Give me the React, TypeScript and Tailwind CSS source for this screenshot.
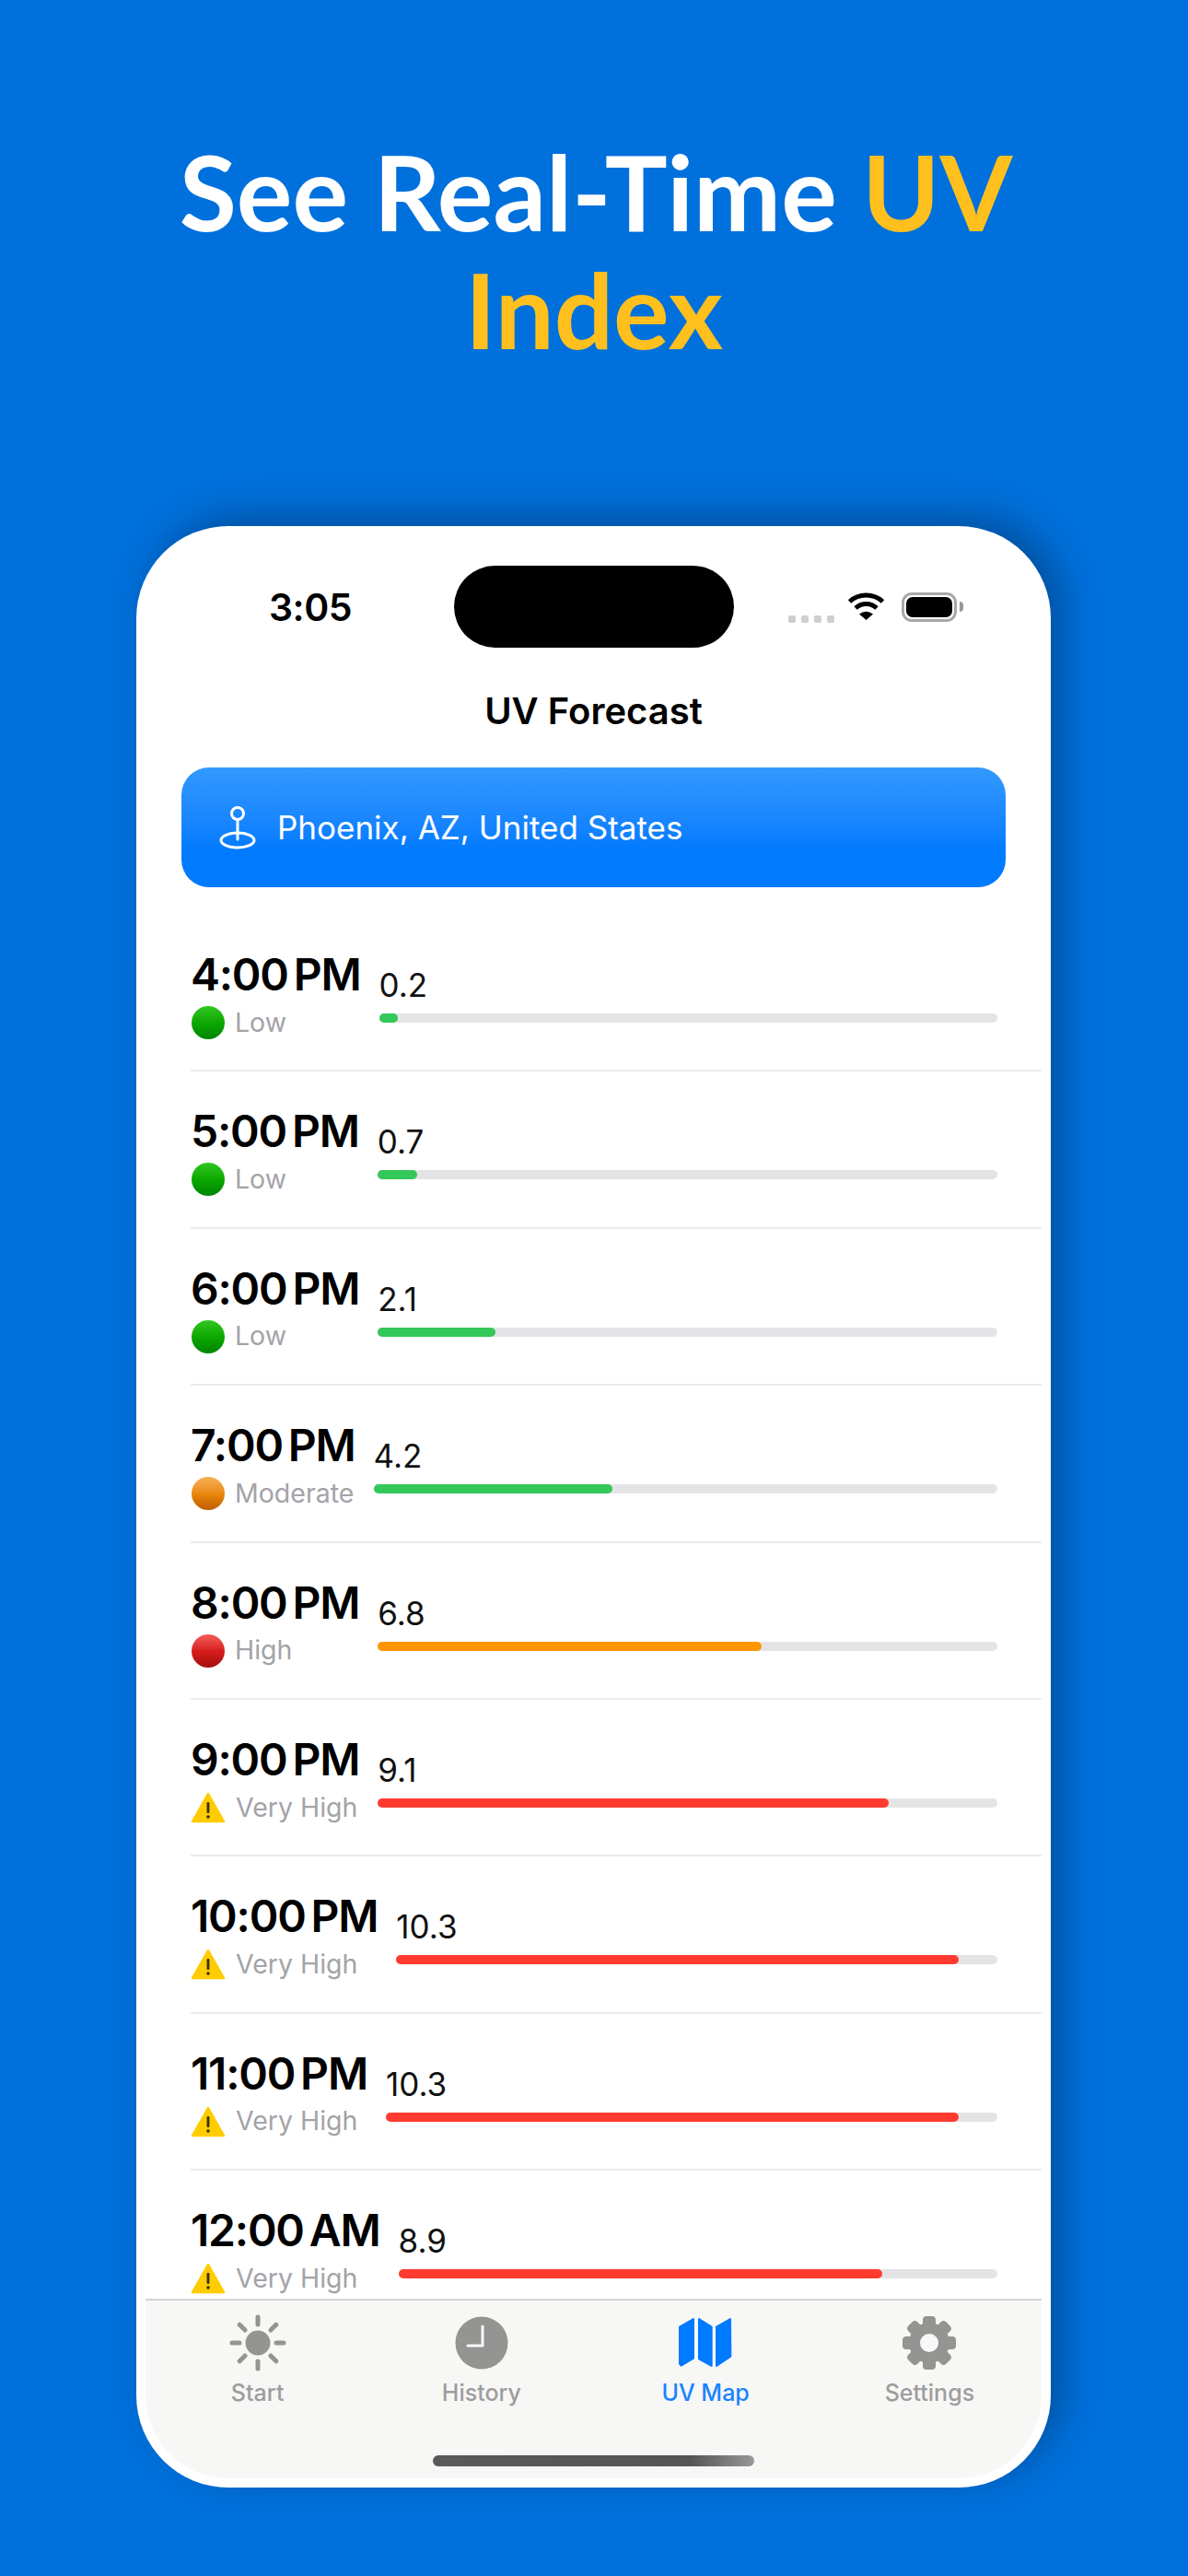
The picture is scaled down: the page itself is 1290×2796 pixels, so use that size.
const forecast = [
  { time: '4:00 PM', value: '0.2', label: 'Low', level: 'low', pct: 3, bar: 'bg-[#34c759]' },
  { time: '5:00 PM', value: '0.7', label: 'Low', level: 'low', pct: 6.4, bar: 'bg-[#34c759]' },
  { time: '6:00 PM', value: '2.1', label: 'Low', level: 'low', pct: 19, bar: 'bg-[#34c759]' },
  { time: '7:00 PM', value: '4.2', label: 'Moderate', level: 'moderate', pct: 38.3, bar: 'bg-[#34c759]' },
  { time: '8:00 PM', value: '6.8', label: 'High', level: 'high', pct: 62, bar: 'bg-[#ff9500]' },
  { time: '9:00 PM', value: '9.1', label: 'Very High', level: 'veryHigh', pct: 82.5, bar: 'bg-[#ff3b30]' },
  { time: '10:00 PM', value: '10.3', label: 'Very High', level: 'veryHigh', pct: 93.6, bar: 'bg-[#ff3b30]' },
  { time: '11:00 PM', value: '10.3', label: 'Very High', level: 'veryHigh', pct: 93.6, bar: 'bg-[#ff3b30]' },
  { time: '12:00 AM', value: '8.9', label: 'Very High', level: 'veryHigh', pct: 80.8, bar: 'bg-[#ff3b30]' },
];

function WarningIcon() {
  return (
    <svg width="38" height="34" viewBox="0 0 38 34" className="-ml-px">
      <path d="M19 2 L36 32 H2 Z" fill="#ffcc00" stroke="#ffcc00" strokeWidth="2.5" strokeLinejoin="round" />
      <rect x="17.6" y="11" width="2.8" height="12" rx="1.2" fill="#3a3000" />
      <circle cx="19" cy="27" r="1.8" fill="#3a3000" />
    </svg>
  );
}

function LevelIcon({ level }: { level: string }) {
  if (level === 'veryHigh') return <WarningIcon />;
  const colors: Record<string, string> = {
    low: 'from-[#2fc71f] via-[#0ca800] to-[#008500]',
    moderate: 'from-[#f9b054] via-[#e98a0c] to-[#c05c00]',
    high: 'from-[#f25a5a] via-[#d81c1c] to-[#a50f0f]',
  };
  return <div className={`h-[36px] w-[36px] rounded-full bg-linear-to-b ${colors[level]}`} />;
}

function ForecastRow({ item }: { item: (typeof forecast)[number] }) {
  return (
    <div className="flex h-[170.4px] shrink-0 gap-[20px] border-b-2 border-[#ececec] pt-[37px] pr-[48px]">
      <div className="shrink-0">
        <div className="text-[48px] leading-[56px] font-semibold tracking-[-1.2px] text-black [word-spacing:-5px]">{item.time}</div>
        <div className="flex h-[48px] items-center gap-[11px] pl-px">
          <LevelIcon level={item.level} />
          <span className="text-[28.5px] text-[#a3a3a8]">{item.label}</span>
        </div>
      </div>
      <div className="flex-1 pt-[19px]">
        <div className="text-[35px] leading-[40px] text-[#111]">{item.value}</div>
        <div className="mt-[11px] h-[10px] rounded-full bg-[#e4e4e6]">
          <div className={`h-full rounded-full ${item.bar}`} style={{ width: `${item.pct}%` }} />
        </div>
      </div>
    </div>
  );
}

function SunIcon() {
  return (
    <svg width="64" height="64" viewBox="0 0 64 64" stroke="#949592" strokeWidth="5" strokeLinecap="round">
      <circle cx="32" cy="32" r="13.5" fill="#949592" stroke="none" />
      <path d="M32 4 V12 M32 52 V60 M4 32 H12 M52 32 H60 M12.2 12.2 L18 18 M46 46 L51.8 51.8 M12.2 51.8 L18 46 M46 18 L51.8 12.2" />
    </svg>
  );
}

function ClockIcon() {
  return (
    <svg width="64" height="64" viewBox="0 0 64 64">
      <circle cx="32" cy="32" r="28.5" fill="#949592" />
      <path d="M33 14 V35 H17" fill="none" stroke="#f7f7f7" strokeWidth="3" strokeLinecap="round" strokeLinejoin="round" />
    </svg>
  );
}

function MapIcon() {
  return (
    <svg width="60" height="56" viewBox="80 40 180 168" fill="#007aff" stroke="#007aff" strokeWidth="6" strokeLinejoin="round">
      <path d="M86 72 L131 46 V174 L91 198 L86 192 Z" />
      <path d="M149 46 L190 72 V199 L149 176 Z" />
      <path d="M206 72 L251 46 L252 168 L206 199 Z" />
    </svg>
  );
}

function GearIcon() {
  const angles = [0, 45, 90, 135, 180, 225, 270, 315];
  return (
    <svg width="64" height="64" viewBox="0 0 64 64">
      {angles.map((angle) => (
        <rect key={angle} x="25" y="3" width="14" height="16" rx="4" fill="#949592" transform={`rotate(${angle} 32 32)`} />
      ))}
      <circle cx="32" cy="32" r="22" fill="#949592" />
      <circle cx="32" cy="32" r="10" fill="#f8f8f8" />
    </svg>
  );
}

const tabs = [
  { name: 'Start', icon: <SunIcon />, active: false },
  { name: 'History', icon: <ClockIcon />, active: false },
  { name: 'UV Map', icon: <MapIcon />, active: true },
  { name: 'Settings', icon: <GearIcon />, active: false },
];

export default function App() {
  return (
    <div className="h-[2796px] w-[1290px] overflow-hidden bg-[#0070dc] pt-[143px] font-[Inter,sans-serif]">
      <h1 className="px-[100px] text-center font-[Lato,sans-serif] text-[113.5px] leading-[128px] font-bold text-white">
        See Real-Time <span className="text-[#ffc01e]">UV</span> <span className="text-[#ffc01e]">Index</span>
      </h1>

      <div className="mt-[172px] ml-[148px] flex h-[2129px] w-[993px] flex-col overflow-hidden rounded-[100px] bg-white shadow-[14px_-12px_40px_rgba(0,0,0,0.28)]">
        {/* Status bar */}
        <div className="flex shrink-0 pt-[43px]">
          <div className="flex w-[345px] items-center justify-center pt-[3px] pl-[33px] text-[41px] font-semibold tracking-[-0.5px] text-black">3:05</div>
          <div className="h-[89px] w-[304px] rounded-[45px] bg-black" />
          <div className="flex h-[89px] flex-1 items-center pl-[59px]">
            <div className="mt-[26px] flex gap-[6px]">
              <div className="h-[8px] w-[8px] rounded-[2px] bg-[#cfcfcf]" />
              <div className="h-[8px] w-[8px] rounded-[2px] bg-[#cfcfcf]" />
              <div className="h-[8px] w-[8px] rounded-[2px] bg-[#cfcfcf]" />
              <div className="h-[8px] w-[8px] rounded-[2px] bg-[#cfcfcf]" />
            </div>
            <svg width="41" height="32" viewBox="0 0 41 32" className="mb-[1px] ml-[14px]" fill="none" stroke="#000" strokeWidth="5">
              <path d="M2.5 11 A27 27 0 0 1 38.5 11" />
              <path d="M9 18 A17 17 0 0 1 32 18" />
              <path d="M20.5 31 L13 24.5 Q20.5 19 28 24.5 Z" fill="#000" stroke="none" />
            </svg>
            <div className="ml-[18px] h-[32px] w-[60px] rounded-[11px] border-[3px] border-[#a8a8a8] p-[2px]">
              <div className="h-full w-full rounded-[7px] bg-black" />
            </div>
            <div className="ml-[3px] h-[11px] w-[4px] rounded-r-full bg-[#999]" />
          </div>
        </div>

        <div className="mt-[45px] shrink-0 text-center text-[40px] leading-[48px] font-semibold text-black">UV Forecast</div>

        {/* Location */}
        <div className="mx-[49px] mt-[37px] flex h-[130px] shrink-0 items-center gap-[23px] rounded-[30px] bg-linear-to-b from-[#3399ff] to-[#007aff] to-70% pl-[41px]">
          <svg width="40" height="48" viewBox="0 0 40 48" fill="none" stroke="#fff" strokeWidth="3">
            <circle cx="20" cy="9" r="6.5" />
            <path d="M20 16 V37" strokeLinecap="round" />
            <ellipse cx="20" cy="38" rx="18" ry="8" />
          </svg>
          <span className="text-[35px] text-white">Phoenix, AZ, United States</span>
        </div>

        {/* Forecast list */}
        <div className="mt-[30px] mr-[10px] ml-[59px] min-h-0 flex-1 overflow-hidden">
          {forecast.map((item) => (
            <ForecastRow key={item.time} item={item} />
          ))}
        </div>

        {/* Tab bar */}
        <div className="mx-[10px] mb-[10px] grid h-[195px] shrink-0 grid-cols-4 rounded-b-[90px] border-t-2 border-[#d4d4d4] bg-[#f7f7f6] pt-[14px]">
          {tabs.map((tab) => (
            <div key={tab.name} className="flex flex-col items-center">
              <div className="flex h-[64px] items-center justify-center">{tab.icon}</div>
              <span className={`mt-[6px] text-[25px] leading-[32px] font-medium ${tab.active ? 'text-[#1a84ff]' : 'text-[#9d9d9d]'}`}>{tab.name}</span>
            </div>
          ))}
        </div>
      </div>

      {/* Home indicator lies over the tab bar */}
      <div className="relative">
        <div className="absolute top-[-35px] left-[470px] h-[12px] w-[349px] rounded-full bg-linear-to-r from-[#5a5a5a] via-[#555] via-80% to-[#999]" />
      </div>
    </div>
  );
}
